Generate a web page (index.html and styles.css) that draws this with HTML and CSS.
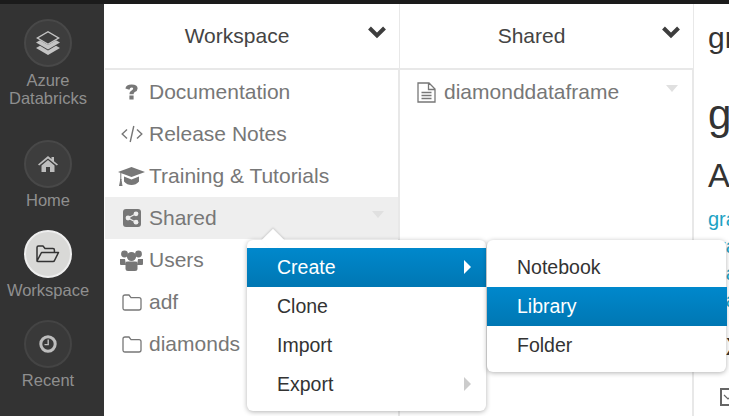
FILE: index.html
```html
<!DOCTYPE html>
<html lang="en">
<head>
  <meta charset="UTF-8" />
  <title>Azure Databricks</title>
  <link rel="stylesheet" href="styles.css">
</head>
<body>
  <div class="topbar"></div>
  <div class="app">
    <nav class="sidebar">
      <a class="nav-item nav-brand">
        <span class="nav-circle">
          <svg width="26" height="26" viewBox="0 0 26 26"><path d="M13 1 L25 8 L13 15 L1 8Z M3.6 8 L13 13.4 L22.4 8 L13 2.6Z" fill="#c4c4c4" fill-rule="evenodd"/><path d="M1 12.5 L5 10.3 L13 15 L21 10.3 L25 12.5 L13 19.5Z" fill="#c4c4c4"/><path d="M1 18 L5 15.8 L13 20.5 L21 15.8 L25 18 L13 25Z" fill="#c4c4c4"/></svg>
        </span>
        <span>Azure<br>Databricks</span>
      </a>
      <a class="nav-item nav-home">
        <span class="nav-circle">
          <svg width="20" height="16" viewBox="0 0 20 16"><path d="M10 0 L13.5 3 V1 H16 V5.2 L20 8.6 L18.8 9.6 L10 2.4 L1.2 9.6 L0 8.6Z" fill="#bdbdbd"/><path d="M3.5 9.4 L10 4 L16.5 9.4 V16 H12 V11 H8 V16 H3.5Z" fill="#bdbdbd"/></svg>
        </span>
        <span>Home</span>
      </a>
      <a class="nav-item nav-active">
        <span class="nav-circle">
          <svg width="24" height="18" viewBox="0 0 24 18"><path d="M1 16 V2.5 Q1 1 2.5 1 H7 L9 3.4 H17 Q18.4 3.4 18.4 5 V7 M1 16 L5.5 7.5 H22.5 L18.5 15.5 Q18.2 16.5 17 16.5 H2 Q1 16.5 1 16Z" fill="none" stroke="#333" stroke-width="1.5" stroke-linejoin="round"/></svg>
        </span>
        <span>Workspace</span>
      </a>
      <a class="nav-item nav-recent">
        <span class="nav-circle">
          <svg width="18" height="18" viewBox="0 0 18 18"><circle cx="9" cy="9" r="7.2" fill="none" stroke="#bdbdbd" stroke-width="3"/><path d="M9.2 4.5 V9.6 H5.5" fill="none" stroke="#bdbdbd" stroke-width="1.4"/></svg>
        </span>
        <span>Recent</span>
      </a>
    </nav>

    <section class="column col-workspace">
      <header class="col-head">
        <span class="col-title">Workspace</span>
        <svg class="chevron" width="20" height="14" viewBox="0 0 20 14"><path d="M2.5 3 L10 10.5 L17.5 3" fill="none" stroke="#3d3d3d" stroke-width="4"/></svg>
      </header>
      <ul class="file-list">
        <li class="file-row">
          <span class="file-icon"><svg width="13" height="16" viewBox="0 0 13 16"><path d="M0.4 4.6 Q1 0.4 6.6 0.4 Q12.6 0.4 12.6 4.4 Q12.6 6.6 9.8 8 Q8.6 8.7 8.6 10.2 H4.4 Q4.2 7.6 6.6 6.4 Q8.2 5.6 8.2 4.5 Q8.2 3.5 6.6 3.5 Q5 3.5 4.4 5.8Z M4.4 11.6 H8.6 V15.6 H4.4Z" fill="#777"/></svg></span>
          <span>Documentation</span>
        </li>
        <li class="file-row">
          <span class="file-icon"><svg width="22" height="18" viewBox="0 0 22 18"><path d="M6 4.5 L1.2 9 L6 13.5 M16 4.5 L20.8 9 L16 13.5 M12.8 1 L9.2 17" fill="none" stroke="#777" stroke-width="1.4"/></svg></span>
          <span>Release Notes</span>
        </li>
        <li class="file-row">
          <span class="file-icon"><svg width="27" height="19" viewBox="0 0 27 19"><path d="M13.5 0 L27 5 L13.5 10 L0 5Z" fill="#777"/><path d="M6 9.6 L13.5 12.4 L21 9.6 V14.5 Q18 18 13.5 18 Q9 18 6 14.5Z" fill="#777"/><path d="M2.8 6 V13 M1.6 19 L2.8 12 L4 19Z" stroke="#777" stroke-width="1" fill="#777"/></svg></span>
          <span>Training &amp; Tutorials</span>
        </li>
        <li class="file-row file-row-selected">
          <span class="file-icon"><svg width="18" height="18" viewBox="0 0 18 18"><rect width="18" height="18" rx="3" fill="#777"/><circle cx="13" cy="4.8" r="2.4" fill="#eee"/><circle cx="5" cy="9" r="2.4" fill="#eee"/><circle cx="13" cy="13.2" r="2.4" fill="#eee"/><path d="M13 4.8 L5 9 L13 13.2" fill="none" stroke="#eee" stroke-width="1.2"/></svg></span>
          <span>Shared</span>
          <span class="row-caret"></span>
        </li>
        <li class="file-row">
          <span class="file-icon"><svg width="23" height="21" viewBox="0 0 23 21"><circle cx="4.5" cy="4" r="3.4" fill="#777"/><circle cx="18.5" cy="4" r="3.4" fill="#777"/><circle cx="11.5" cy="6.5" r="4.6" fill="#777"/><path d="M0 9 H5 L6 15 H1 Q0 15 0 14Z M23 9 H18 L17 15 H22 Q23 15 23 14Z" fill="#777"/><path d="M5.5 13 Q5.5 11.6 8 11.6 H15 Q17.5 11.6 17.5 13 V18.5 Q17.5 21 15 21 H8 Q5.5 21 5.5 18.5Z" fill="#777"/></svg></span>
          <span>Users</span>
        </li>
        <li class="file-row">
          <span class="file-icon"><svg width="20" height="17" viewBox="0 0 20 17"><path d="M1 3 Q1 1 3 1 H7 L9 3.6 H17 Q19 3.6 19 5.6 V14 Q19 16 17 16 H3 Q1 16 1 14Z" fill="none" stroke="#777" stroke-width="1.3"/></svg></span>
          <span>adf</span>
        </li>
        <li class="file-row">
          <span class="file-icon"><svg width="20" height="17" viewBox="0 0 20 17"><path d="M1 3 Q1 1 3 1 H7 L9 3.6 H17 Q19 3.6 19 5.6 V14 Q19 16 17 16 H3 Q1 16 1 14Z" fill="none" stroke="#777" stroke-width="1.3"/></svg></span>
          <span>diamonds</span>
        </li>
      </ul>
    </section>

    <section class="column col-shared">
      <header class="col-head">
        <span class="col-title">Shared</span>
        <svg class="chevron" width="20" height="14" viewBox="0 0 20 14"><path d="M2.5 3 L10 10.5 L17.5 3" fill="none" stroke="#3d3d3d" stroke-width="4"/></svg>
      </header>
      <ul class="file-list">
        <li class="file-row">
          <span class="file-icon"><svg width="19" height="21" viewBox="0 0 19 21"><path d="M1 1 H12 L18 7 V20 H1Z M11.5 1.5 V7.5 H17.5 M4.5 10.5 H14.5 M4.5 13.5 H14.5 M4.5 16.5 H14.5" fill="none" stroke="#777" stroke-width="1.3"/></svg></span>
          <span>diamonddataframe</span>
          <span class="row-caret"></span>
        </li>
      </ul>
    </section>

    <main class="detail">
      <p class="detail-crumb">gr</p>
      <h1 class="detail-title">g</h1>
      <h2 class="detail-sub">A</h2>
      <a class="detail-link">gra</a>
      <a class="detail-link">gra</a>
      <a class="detail-link">gra</a>
      <a class="detail-link">gra</a>
      <h3 class="detail-mark">X</h3>
      <span class="detail-check">
        <svg width="12" height="12" viewBox="0 0 12 12"><path d="M1 4 L5 8 L11 2" fill="none" stroke="#666" stroke-width="1.2"/></svg>
      </span>
    </main>
  </div>

  <div class="menu menu-main">
    <span class="menu-notch"></span>
    <div class="menu-item menu-item-on">Create<span class="menu-arrow menu-arrow-on"></span></div>
    <div class="menu-item">Clone</div>
    <div class="menu-item">Import</div>
    <div class="menu-item">Export<span class="menu-arrow"></span></div>
  </div>
  <div class="menu menu-sub">
    <div class="menu-item">Notebook</div>
    <div class="menu-item menu-item-on">Library</div>
    <div class="menu-item">Folder</div>
  </div>
</body>
</html>
```

FILE: styles.css
```css
html, body {
  height: 100%;
  margin: 0;
  overflow: hidden;
  font-family: "Liberation Sans", Arial, sans-serif;
  background-color: #fff;
}

body {
  display: flex;
  flex-direction: column;
}

ul {
  list-style: none;
  margin: 0;
  padding: 0;
}

.topbar {
  height: 4px;
  background-color: #1b1b1b;
  flex: none;
}

.app {
  display: flex;
  flex: 1;
  min-height: 0;
}

/* left nav */
.sidebar {
  width: 104px;
  flex: none;
  background-color: #333;
  display: flex;
  flex-direction: column;
  align-items: center;
  padding: 15px 8px 0 0;
  box-sizing: border-box;
  color: #8f8f8f;
  font-size: 16.5px;
  line-height: 18px;
  text-align: center;
}

.nav-item {
  display: flex;
  flex-direction: column;
  align-items: center;
  gap: 3px;
}

.nav-brand {
  gap: 4px;
  margin-bottom: 33px;
}

.nav-home,
.nav-active {
  margin-bottom: 21px;
}

.nav-circle {
  width: 48px;
  height: 48px;
  box-sizing: border-box;
  border: 2px solid #484848;
  border-radius: 50%;
  background-color: #3d3d3d;
  display: flex;
  align-items: center;
  justify-content: center;
}

.nav-active .nav-circle {
  background-color: #d9d9d7;
  border-color: #eee;
}

.nav-recent .nav-circle {
  background-color: #393939;
  border-color: #444;
}

/* file browser columns */
.column {
  flex: none;
  box-sizing: border-box;
  display: flex;
  flex-direction: column;
}

.col-workspace {
  width: 296px;
  padding-left: 1px;
}

.col-shared {
  width: 294px;
}

.col-head {
  height: 66px;
  flex: none;
  border-bottom: 2px solid #e8e8e8;
  border-right: 1px solid #e8e8e8;
  padding-right: 30px;
  display: flex;
  align-items: center;
  justify-content: center;
  position: relative;
  box-sizing: border-box;
}

.col-title {
  font-size: 21px;
  color: #444;
}

.chevron {
  position: absolute;
  right: 12px;
  top: 21px;
}

.file-list {
  flex: 1;
  padding-top: 1px;
  border-right: 2px solid #e8e8e8;
}

.file-row {
  height: 42px;
  display: flex;
  align-items: center;
  padding-left: 9px;
  font-size: 21px;
  color: #777;
  position: relative;
}

.file-row-selected {
  background-color: #eee;
}

.file-icon {
  width: 35px;
  flex: none;
  display: flex;
  justify-content: center;
  align-items: center;
}

.row-caret {
  position: absolute;
  right: 14px;
  top: 14px;
  border-left: 6.5px solid transparent;
  border-right: 6.5px solid transparent;
  border-top: 7px solid #e0e0e0;
}

/* right pane */
.detail {
  flex: 1;
  padding-left: 14px;
  overflow: hidden;
  color: #333;
}

.detail-crumb {
  margin: 18px 0 0;
  font-size: 30px;
  line-height: 32px;
}

.detail-title {
  margin: 38px 0 0;
  font-size: 42px;
  font-weight: normal;
  line-height: 46px;
}

.detail-sub {
  margin: 19px 0 11px;
  font-size: 33px;
  font-weight: normal;
  line-height: 38px;
}

.detail-link {
  display: block;
  font-size: 20px;
  line-height: 27px;
  color: #1ea2c4;
}

.detail-mark {
  margin: 21px 0 0 18px;
  font-size: 24px;
  line-height: 24px;
}

.detail-check {
  display: flex;
  align-items: center;
  justify-content: center;
  width: 18px;
  height: 18px;
  box-sizing: border-box;
  margin: 29px 0 0 12px;
  border: 2px solid #666;
}

/* context menus */
.menu {
  position: absolute;
  background-color: #fff;
  border-radius: 6px;
  box-shadow: 0 1px 5px rgba(0, 0, 0, 0.3);
  padding: 8px 0;
  font-size: 19.5px;
  color: #333;
  box-sizing: border-box;
}

.menu-main {
  left: 247px;
  top: 240px;
  width: 239px;
  height: 171px;
}

.menu-sub {
  left: 487px;
  top: 240px;
  width: 239px;
  height: 132px;
}

.menu-item {
  height: 39px;
  line-height: 39px;
  padding-left: 30px;
  position: relative;
}

.menu-item-on {
  background: linear-gradient(#0088cc, #0077b3);
  color: #fff;
}

.menu-sub .menu-item-on {
  margin-right: -1px;
}

.menu-arrow {
  position: absolute;
  right: 15px;
  top: 12px;
  border-top: 7px solid transparent;
  border-bottom: 7px solid transparent;
  border-left: 7px solid #ccc;
}

.menu-arrow-on {
  border-left-color: #fff;
}

.menu-notch {
  position: absolute;
  left: 18px;
  top: -8px;
  width: 16px;
  height: 16px;
  background-color: #fff;
  transform: rotate(45deg);
  box-shadow: -1px -1px 2px rgba(0, 0, 0, 0.12);
}
```
